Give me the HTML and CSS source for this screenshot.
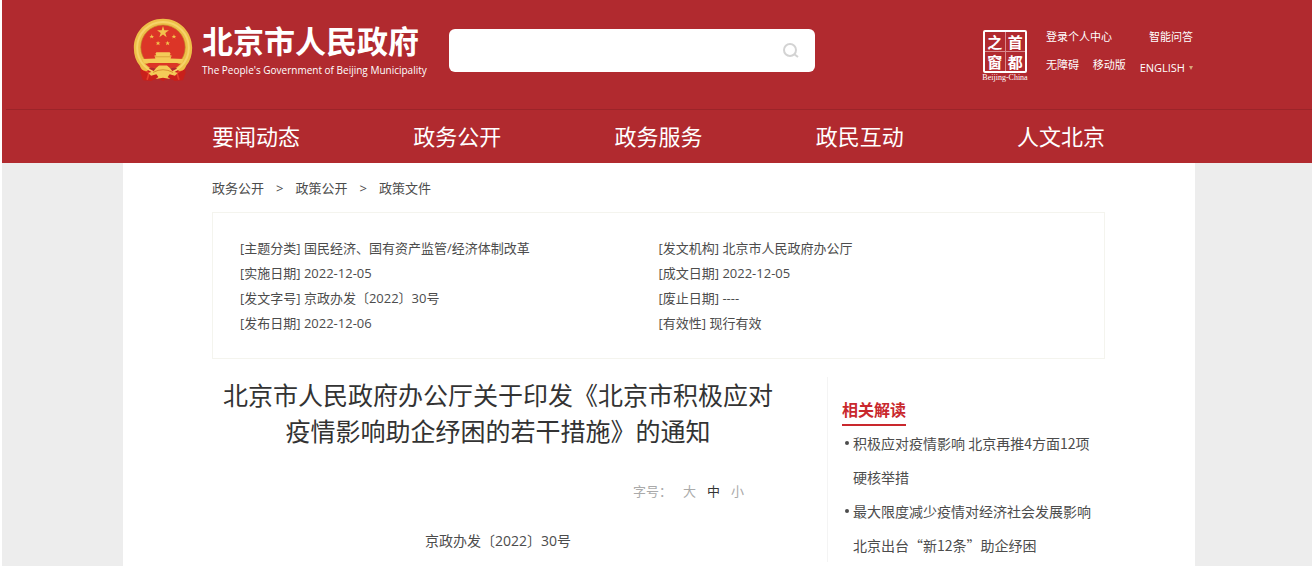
FILE: index.html
```html
<!DOCTYPE html>
<html lang="zh-CN">
<head>
    <meta charset="UTF-8">
    <meta name="viewport" content="width=device-width, initial-scale=1.0">
    <title>北京市人民政府办公厅关于印发《北京市积极应对疫情影响助企纾困的若干措施》的通知</title>
    <link rel="stylesheet" href="styles.css">
</head>
<body>

<header class="header">
    <div class="wrap header-top">
        <a class="logo" href="#">
            <svg class="emblem" viewBox="0 0 180 190" aria-hidden="true">
                <!-- ribbons -->
                <path d="M24 142 L60 158 L90 168 L120 158 L156 142 L158 166 L150 188 L126 190 L108 182 L90 190 L72 182 L54 190 L30 188 L22 166 Z" fill="#c9201b"/>
                <path d="M26 152 L48 166 L42 186 M154 152 L132 166 L138 186" fill="none" stroke="#e8402c" stroke-width="5"/>
                <!-- wheat ring -->
                <path d="M90 2 C40 2 2 42 2 90 C2 112 8 130 20 144 C24 156 32 160 42 160 L54 146 L126 146 L138 160 C148 160 156 156 160 144 C172 130 178 112 178 90 C178 42 140 2 90 2 Z" fill="#eebf48"/>
                <circle cx="90" cy="90" r="78" fill="none" stroke="#f6d369" stroke-width="6"/>
                <circle cx="90" cy="88" r="67" fill="#dc3527" stroke="#c0892a" stroke-width="2"/>
                <!-- stars -->
                <g fill="#f2c34c">
                    <path d="M90 24 L94 37 L108 37 L97 45 L101 58 L90 50 L79 58 L83 45 L72 37 L86 37 Z"/>
                    <path d="M56 49 L58 54 L63 54 L59 57 L61 62 L56 59 L51 62 L53 57 L49 54 L54 54 Z"/>
                    <path d="M123 49 L125 54 L130 54 L126 57 L128 62 L123 59 L118 62 L120 57 L116 54 L121 54 Z"/>
                    <path d="M75 69 L77 74 L82 74 L78 77 L80 82 L75 79 L70 82 L72 77 L68 74 L73 74 Z"/>
                    <path d="M104 69 L106 74 L111 74 L107 77 L109 82 L104 79 L99 82 L101 77 L97 74 L102 74 Z"/>
                </g>
                <!-- gate -->
                <path d="M70 103 L110 103 L113 108 L110 112 L116 113 L113 122 L152 124 L148 136 L32 136 L28 124 L67 122 L64 113 L70 112 L67 108 Z" fill="#f4cb58"/>
                <path d="M66 117 H114" stroke="#d08c2a" stroke-width="2"/>
                <path d="M36 138 H144 L130 150 H50 Z" fill="#dc3527"/>
                <!-- gear and knot -->
                <path d="M70 150 L78 143 H102 L110 150 L118 160 L134 166 L126 174 L110 170 L104 178 L112 184 L90 180 L68 184 L76 178 L70 170 L54 174 L46 166 L62 160 Z" fill="#f4cb58"/>
                <path d="M60 164 Q90 148 120 164" fill="none" stroke="#d98f30" stroke-width="3"/>
            </svg>
            <span class="logo-text">
                <strong class="logo-cn">北京市人民政府</strong>
                <span class="logo-en">The People's Government of Beijing Municipality</span>
            </span>
        </a>

        <form class="search">
            <input type="text" class="search-input" aria-label="搜索">
            <button type="submit" class="search-btn" aria-label="搜索">
                <svg width="18" height="18" viewBox="0 0 18 18" fill="none" stroke="#d3d3d3" stroke-width="2">
                    <ellipse cx="8" cy="8" rx="6" ry="6"/>
                    <path d="M12 12 L16 15"/>
                </svg>
            </button>
        </form>

        <a class="seal" href="#">
            <span class="seal-box">
                <span>之</span><span>首</span><span>窗</span><span>都</span>
            </span>
            <span class="seal-name">Beijing-China</span>
        </a>

        <div class="tools">
            <div class="tools-row">
                <a href="#">登录个人中心</a>
                <a href="#">智能问答</a>
            </div>
            <div class="tools-row">
                <a href="#">无障碍</a>
                <a href="#">移动版</a>
                <button type="button" class="lang">ENGLISH<span class="lang-arrow"></span></button>
            </div>
        </div>
    </div>

    <nav class="nav">
        <div class="wrap nav-list">
            <a href="#">要闻动态</a>
            <a href="#">政务公开</a>
            <a href="#">政务服务</a>
            <a href="#">政民互动</a>
            <a href="#">人文北京</a>
        </div>
    </nav>
</header>

<div class="page">
    <main class="wrap content">
        <div class="crumbs">
            <a href="#">政务公开</a>
            <span>&gt;</span>
            <a href="#">政策公开</a>
            <span>&gt;</span>
            <a href="#">政策文件</a>
        </div>

        <div class="doc-info">
            <ul>
                <li>[主题分类] 国民经济、国有资产监管/经济体制改革</li>
                <li>[实施日期] 2022-12-05</li>
                <li>[发文字号] 京政办发〔2022〕30号</li>
                <li>[发布日期] 2022-12-06</li>
            </ul>
            <ul>
                <li>[发文机构] 北京市人民政府办公厅</li>
                <li>[成文日期] 2022-12-05</li>
                <li>[废止日期] ----</li>
                <li>[有效性] 现行有效</li>
            </ul>
        </div>

        <div class="columns">
            <article class="article">
                <h1>北京市人民政府办公厅关于印发《北京市积极应对疫情影响助企纾困的若干措施》的通知</h1>
                <div class="font-size">
                    <span class="font-size-label">字号：</span>
                    <button type="button">大</button>
                    <button type="button" class="active">中</button>
                    <button type="button">小</button>
                </div>
                <p class="doc-number">京政办发〔2022〕30号</p>
            </article>

            <aside class="related">
                <h2>相关解读</h2>
                <ul>
                    <li><a href="#">积极应对疫情影响 北京再推4方面12项硬核举措</a></li>
                    <li><a href="#">最大限度减少疫情对经济社会发展影响 北京出台“新12条”助企纾困</a></li>
                </ul>
            </aside>
        </div>
    </main>
</div>

</body>
</html>
```
FILE: styles.css
```css
* {
    box-sizing: border-box;
}
body {
    margin: 0;
    padding-left: 2px;
    font-family: "Open Sans", "Noto Sans CJK SC", sans-serif;
    font-size: 13px;
    color: #4c4c4c;
    background-color: #fff;
}
a {
    color: inherit;
    text-decoration: none;
}
ul {
    list-style: none;
    margin: 0;
    padding: 0;
}
button {
    font: inherit;
    color: inherit;
    background: none;
    border: none;
    padding: 0;
    cursor: pointer;
}
.wrap {
    max-width: 1072px;
    margin: 0 auto;
}

/* header */
.header {
    padding-left: 4px;
    background-color: #b12a2f;
    color: #fff;
}
.header-top {
    display: flex;
    align-items: flex-start;
    height: 109px;
    padding: 18px 2px 0 10px;
}
.logo {
    display: flex;
    gap: 9px;
}
.emblem {
    width: 60px;
    height: 63px;
}
.logo-text {
    display: flex;
    flex-direction: column;
    padding-top: 4px;
    white-space: nowrap;
}
.logo-cn {
    font-size: 31px;
    line-height: 38px;
}
.logo-en {
    font-size: 10px;
    line-height: 20px;
}
.search {
    display: flex;
    align-items: center;
    width: 366px;
    height: 43px;
    margin: 11px 0 0 auto;
    padding-right: 15px;
    background-color: #fff;
    border-radius: 6px;
}
.search-input {
    flex: 1;
    height: 100%;
    padding: 0 16px;
    border: none;
    outline: none;
    background: none;
    font: inherit;
}
.search-btn {
    display: flex;
}
.seal {
    width: 50px;
    margin: 12px 0 0 165px;
    text-align: center;
}
.seal-box {
    display: grid;
    grid-template-columns: 1fr 1fr;
    gap: 1px;
    width: 44px;
    height: 43px;
    margin: 0 auto;
    border: 2px solid #fff;
    border-radius: 2px;
    background-color: #d98a8d;
}
.seal-box span {
    background-color: #b12a2f;
    font-family: "Noto Sans CJK SC", sans-serif;
    font-size: 15px;
    font-weight: bold;
    line-height: 19px;
}
.seal-name {
    display: block;
    font-family: "Liberation Serif", serif;
    font-size: 8px;
    line-height: 10px;
}
.tools {
    width: 147px;
    margin: 5px 0 0 16px;
    font-size: 11px;
    line-height: 28px;
}
.tools-row {
    display: flex;
    justify-content: space-between;
    align-items: flex-start;
    height: 28px;
}
.lang {
    display: flex;
    align-items: center;
    gap: 4px;
    line-height: 34px;
}
.lang-arrow {
    border: 2px solid transparent;
    border-top: 4px solid #d9a878;
    border-bottom: none;
}

/* navigation */
.nav {
    border-top: 1px solid #9c2429;
}
.nav-list {
    display: flex;
    justify-content: space-between;
    padding: 0 90px 0 89px;
    font-size: 22px;
    line-height: 53px;
}

/* content */
.page {
    padding-left: 4px;
    background-color: #ededed;
}
.content {
    min-height: calc(100vh - 163px);
    padding: 13px 90px 0 89px;
    background-color: #fff;
}
.crumbs {
    display: flex;
    gap: 12px;
    line-height: 24px;
}
.doc-info {
    display: grid;
    grid-template-columns: 1fr 1fr;
    margin-top: 12px;
    padding: 23px 27px 22px;
    border: 1px solid #f4f4ee;
    line-height: 25px;
}
.columns {
    display: flex;
    justify-content: space-between;
    margin-top: 18px;
}
.article {
    width: 572px;
}
.article h1 {
    margin: 0;
    font-size: 25px;
    font-weight: normal;
    line-height: 36px;
    text-align: center;
    color: #333;
}
.font-size {
    display: flex;
    justify-content: flex-end;
    gap: 11px;
    margin-top: 30px;
    padding-right: 40px;
    line-height: 24px;
    color: #aaa;
}
.font-size .active {
    color: #333;
}
.doc-number {
    margin: 26px 0 0;
    font-size: 14px;
    line-height: 24px;
    text-align: center;
}
.related {
    width: 278px;
    padding: 21px 7px 0 14px;
    border-left: 1px solid #f4f4f4;
}
.related h2 {
    display: inline-block;
    margin: 0;
    padding-bottom: 2px;
    border-bottom: 2px solid #c9282d;
    font-size: 16px;
    line-height: 24px;
    color: #c9282d;
    vertical-align: top;
}
.related ul {
    font-family: "Noto Sans CJK SC", sans-serif;
    font-size: 14px;
    line-height: 34px;
}
.related li {
    display: flex;
    gap: 4px;
}
.related li::before {
    content: "";
    flex: none;
    width: 4px;
    height: 4px;
    margin: 15px 0 0 3px;
    border-radius: 50%;
    background-color: #4c4c4c;
}
```
